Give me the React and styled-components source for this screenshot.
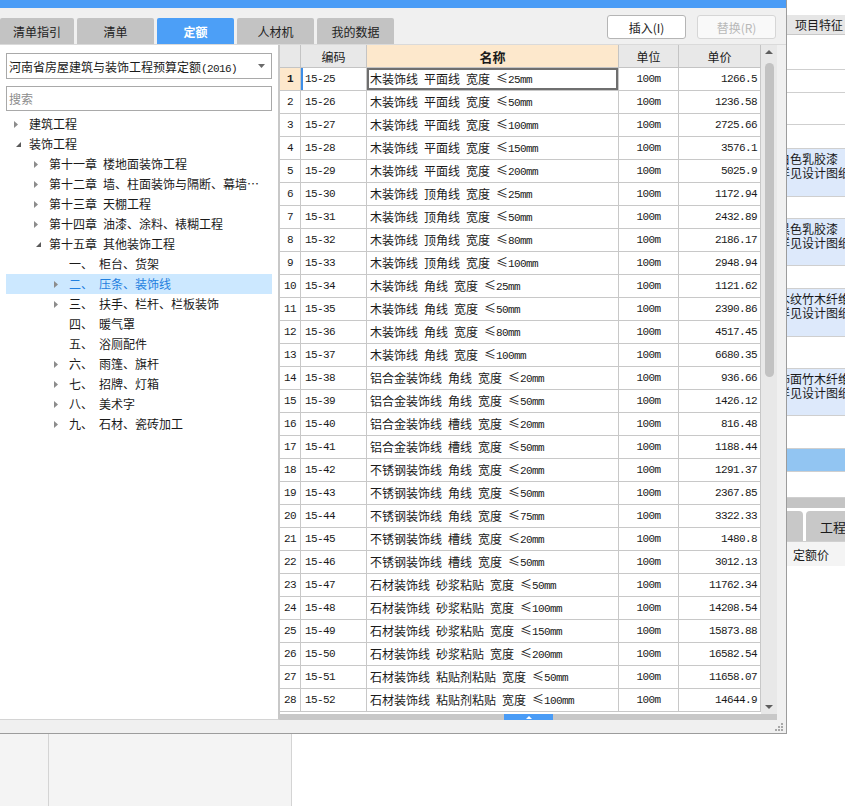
import React from "react";
import styled, { createGlobalStyle } from "styled-components";

const CJK = `"Noto Sans CJK SC", "Liberation Sans", sans-serif`;
const MONO = `"Liberation Mono", "Noto Sans CJK SC", monospace`;

const GlobalStyle = createGlobalStyle`
  html, body { margin: 0; padding: 0; background: #fff; }
  body {
    width: 845px; height: 806px; overflow: hidden;
    font-family: ${CJK}; font-size: 12px; color: #1a1a1a;
  }
  * { box-sizing: border-box; }
`;

const Page = styled.div`
  position: relative;
  width: 845px;
  height: 806px;
  overflow: hidden;
  background: #fff;
`;

/* ---------- background application ---------- */
const Background = styled.div`
  display: flex;
  flex-direction: column;
  height: 806px;
`;
const TopArea = styled.div`
  display: flex;
  height: 734px;
`;
const Filler = styled.div`
  flex: 1;
  background: #f0f0f0;
`;
const RightPanel = styled.div`
  width: 69px;
  display: flex;
  flex-direction: column;
  background: #fff;
  overflow: hidden;
`;
const PanelTopGap = styled.div`
  height: 15px;
`;
const PanelHeader = styled.div`
  height: 20px;
  display: flex;
  align-items: center;
  padding-left: 19px;
  background: #e6e6e6;
  border-bottom: 1px solid #c8c8c8;
  white-space: nowrap;
  line-height: 1;
`;
const FeatureRow = styled.div`
  height: ${(p) => p.$h}px;
  flex: none;
  border-bottom: 1px solid #cfcfcf;
  background: ${(p) => (p.$tone === "light" ? "#dde9fb" : p.$tone === "strong" ? "#92c5f2" : "#fff")};
  padding: 3px 0 0 2px;
  white-space: nowrap;
  line-height: 14px;
`;
const PanelScroll = styled.div`
  height: 10px;
  background: #c4c4c4;
  flex: none;
`;
const PanelTabs = styled.div`
  display: flex;
  gap: 3px;
  height: 30px;
  margin-top: 3px;
  flex: none;
`;
const PanelTab = styled.div`
  width: ${(p) => (p.$w ? `${p.$w}px` : "auto")};
  flex: ${(p) => (p.$w ? "none" : "1")};
  background: #c8c8c8;
  border-radius: 4px 4px 0 0;
  display: flex;
  align-items: center;
  padding-left: 14px;
  white-space: nowrap;
  font-size: 13px;
`;
const PanelPriceRow = styled.div`
  height: 25px;
  flex: none;
  display: flex;
  align-items: center;
  padding-left: 17px;
  background: #f4f4f4;
  border-top: 1px solid #d0d0d0;
  white-space: nowrap;
`;
const BottomArea = styled.div`
  display: flex;
  height: 72px;
`;
const BottomSide = styled.div`
  width: ${(p) => p.$w}px;
  background: #f4f4f4;
  border-right: 1px solid #d4d4d4;
`;
const BottomMain = styled.div`
  flex: 1;
  background: #fff;
`;

/* ---------- dialog ---------- */
const Dialog = styled.div`
  position: absolute;
  top: 0;
  left: 0;
  width: 787px;
  height: 734px;
  display: flex;
  flex-direction: column;
  background: #f0f0f0;
  border-right: 1px solid #9c9c9c;
  border-bottom: 1px solid #9c9c9c;
`;
const TitleBar = styled.div`
  height: 8px;
  background: #4a9cf6;
  flex: none;
`;
const Toolbar = styled.div`
  height: 36px;
  display: flex;
  align-items: flex-end;
  padding-right: 10px;
  flex: none;
`;
const TabList = styled.div`
  display: flex;
  gap: 3px;
`;
const Tab = styled.div`
  width: ${(p) => p.$w}px;
  height: 26px;
  display: flex;
  align-items: center;
  justify-content: center;
  border-radius: 2px 2px 0 0;
  background: ${(p) => (p.$active ? "#4c9ff7" : "#c3c3c3")};
  color: ${(p) => (p.$active ? "#fff" : "#222")};
  font-weight: ${(p) => (p.$active ? 700 : 400)};
  font-size: 12px;
`;
const Spacer = styled.div`
  flex: 1;
`;
const ButtonGroup = styled.div`
  display: flex;
  gap: 11px;
  align-self: flex-start;
  margin-top: 7px;
`;
const ActionButton = styled.button`
  width: 79px;
  height: 24px;
  padding: 0;
  border-radius: 3px;
  border: 1px solid ${(p) => (p.disabled ? "#d6d6d6" : "#b5b5b5")};
  background: ${(p) => (p.disabled ? "#f9f9f9" : "#fff")};
  color: ${(p) => (p.disabled ? "#b8b8b8" : "#222")};
  font-family: ${CJK};
  font-size: 12px;
`;
const Separator = styled.div`
  height: 1px;
  background: #dadada;
  flex: none;
`;
const Body = styled.div`
  display: flex;
  height: 675px;
  flex: none;
`;
const LeftPanel = styled.div`
  width: 280px;
  flex: none;
  display: flex;
  flex-direction: column;
  background: #fff;
  border-right: 2px solid #c8c8c8;
  border-bottom: 1px solid #d4d4d4;
  padding: 8px 6px 0 6px;
`;
const SelectBox = styled.div`
  height: 26px;
  border: 1px solid #a9a9a9;
  display: flex;
  align-items: center;
  justify-content: space-between;
  padding: 0 6px 0 2px;
  white-space: nowrap;
`;
const SearchBox = styled.div`
  margin-top: 7px;
  height: 25px;
  border: 1px solid #a9a9a9;
  display: flex;
  align-items: center;
  padding-left: 2px;
  color: #8c8c8c;
`;
const Tree = styled.div`
  margin-top: 3px;
  display: flex;
  flex-direction: column;
`;
const TreeRow = styled.div`
  height: 20px;
  display: flex;
  align-items: center;
  padding-left: ${(p) => 6 + p.$level * 20}px;
  padding-right: 6px;
  background: ${(p) => (p.$selected ? "#cce8ff" : "transparent")};
  color: ${(p) => (p.$selected ? "#1f80e0" : "#1a1a1a")};
  white-space: nowrap;
`;
const ArrowBox = styled.span`
  width: 17px;
  flex: none;
  display: flex;
  align-items: center;
  padding-left: ${(p) => (p.$open ? 4 : 2)}px;
`;
const TreeLabel = styled.span`
  flex: 1;
  min-width: 0;
  overflow: hidden;
  text-overflow: ellipsis;
  white-space: nowrap;
  line-height: 20px;
`;
const Gap = styled.span`
  margin-left: 6px;
`;
const GridArea = styled.div`
  flex: 1;
  display: flex;
  flex-direction: column;
`;
const GridMain = styled.div`
  height: 669px;
  display: flex;
  flex: none;
`;
const Table = styled.div`
  width: 481px;
  background: #fff;
  display: flex;
  flex-direction: column;
`;
const COLS = "21px 66px 252px 60px 82px";
const HeaderRow = styled.div`
  display: grid;
  grid-template-columns: ${COLS};
  height: 23px;
  flex: none;
`;
const HeaderCell = styled.div`
  display: flex;
  align-items: center;
  justify-content: center;
  background: ${(p) => (p.$hot ? "#fde8cc" : "#e8e8e8")};
  border-right: 1px solid #c4c4c4;
  border-bottom: 1px solid #c4c4c4;
  font-weight: ${(p) => (p.$hot ? 700 : 400)};
  font-size: ${(p) => (p.$hot ? 13 : 12)}px;
`;
const DataRow = styled.div`
  display: grid;
  grid-template-columns: ${COLS};
  height: 23px;
  flex: none;
`;
const Cell = styled.div`
  display: flex;
  align-items: center;
  justify-content: ${(p) => (p.$align === "right" ? "flex-end" : p.$align === "center" ? "center" : "flex-start")};
  padding: 0 ${(p) => (p.$align === "right" ? 3 : 0)}px 0 ${(p) => (p.$align === "left" ? p.$pl || 3 : 0)}px;
  border-right: 1px solid #c8c8c8;
  border-bottom: 1px solid #c8c8c8;
  background: ${(p) => (p.$hot ? "#fde8cc" : "#fff")};
  box-shadow: ${(p) => (p.$focus ? "inset 0 0 0 2px #6f6f6f" : p.$mark ? "inset 2px 0 0 #3d8ee8" : "none")};
  white-space: nowrap;
  overflow: hidden;
  line-height: 1;
`;
const Mono = styled.span`
  font-family: ${MONO};
  font-size: 11px;
  letter-spacing: -0.6px;
  font-weight: ${(p) => (p.$bold ? 700 : 400)};
`;
const Word = styled.span`
  margin-right: ${(p) => (p.$gap ? 6 : 0)}px;
`;
const VScroll = styled.div`
  width: 16px;
  background: #e8e8e8;
  display: flex;
  flex-direction: column;
  align-items: center;
`;
const ScrollArrow = styled.div`
  margin-top: ${(p) => (p.$up ? 5 : 0)}px;
  margin-bottom: ${(p) => (p.$up ? 0 : 5)}px;
  height: 4px;
  display: flex;
`;
const Thumb = styled.div`
  margin-top: 9px;
  width: 9px;
  height: 314px;
  border-radius: 5px;
  background: #c2c2c2;
`;
const HScroll = styled.div`
  height: 6px;
  background: #c8c8c8;
  display: flex;
  justify-content: center;
  flex: none;
`;
const Handle = styled.div`
  width: 49px;
  height: 6px;
  background: #4a9cf6;
  display: flex;
  align-items: center;
  justify-content: center;
`;
const RightGap = styled.div`
  width: 9px;
  flex: none;
`;
const BottomStrip = styled.div`
  height: 13px;
  display: flex;
  align-items: center;
  justify-content: flex-end;
  padding-right: 3px;
  flex: none;
`;

/* ---------- icons ---------- */
const ClosedArrow = () => (
  <svg width="4" height="7" viewBox="0 0 4 7"><path d="M0 0L4 3.5L0 7Z" fill="#8c8c8c" /></svg>
);
const OpenArrow = () => (
  <svg width="5" height="5" viewBox="0 0 5 5"><path d="M5 0V5H0Z" fill="#5a5a5a" /></svg>
);
const DropArrow = () => (
  <svg width="7" height="4" viewBox="0 0 7 4"><path d="M0 0H7L3.5 4Z" fill="#6a6a6a" /></svg>
);
const UpArrow = ({ color = "#5e5e5e" }) => (
  <svg width="8" height="4" viewBox="0 0 8 4"><path d="M4 0L8 4H0Z" fill={color} /></svg>
);
const DownArrow = () => (
  <svg width="8" height="4" viewBox="0 0 8 4"><path d="M0 0H8L4 4Z" fill="#5e5e5e" /></svg>
);
const Grip = () => (
  <svg width="8" height="8" viewBox="0 0 8 8" fill="#a8a8a8">
    <rect x="6" y="0" width="2" height="2" />
    <rect x="3" y="3" width="2" height="2" />
    <rect x="6" y="3" width="2" height="2" />
    <rect x="0" y="6" width="2" height="2" />
    <rect x="3" y="6" width="2" height="2" />
    <rect x="6" y="6" width="2" height="2" />
  </svg>
);

/* ---------- data ---------- */
const tabs = [
  { label: "清单指引", w: 74 },
  { label: "清单", w: 77 },
  { label: "定额", w: 77, active: true },
  { label: "人材机", w: 77 },
  { label: "我的数据", w: 77 },
];

const tree = [
  { level: 0, arrow: "closed", label: "建筑工程" },
  { level: 0, arrow: "open", label: "装饰工程" },
  { level: 1, arrow: "closed", prefix: "第十一章", label: "楼地面装饰工程" },
  { level: 1, arrow: "closed", prefix: "第十二章", label: "墙、柱面装饰与隔断、幕墙工程" },
  { level: 1, arrow: "closed", prefix: "第十三章", label: "天棚工程" },
  { level: 1, arrow: "closed", prefix: "第十四章", label: "油漆、涂料、裱糊工程" },
  { level: 1, arrow: "open", prefix: "第十五章", label: "其他装饰工程" },
  { level: 2, prefix: "一、", label: "柜台、货架" },
  { level: 2, arrow: "closed", prefix: "二、", label: "压条、装饰线", selected: true },
  { level: 2, arrow: "closed", prefix: "三、", label: "扶手、栏杆、栏板装饰" },
  { level: 2, prefix: "四、", label: "暖气罩" },
  { level: 2, prefix: "五、", label: "浴厕配件" },
  { level: 2, arrow: "closed", prefix: "六、", label: "雨篷、旗杆" },
  { level: 2, arrow: "closed", prefix: "七、", label: "招牌、灯箱" },
  { level: 2, arrow: "closed", prefix: "八、", label: "美术字" },
  { level: 2, arrow: "closed", prefix: "九、", label: "石材、瓷砖加工" },
];

const rows = [
  ["15-25", "木装饰线 平面线 宽度 ≤25mm", "1266.5"],
  ["15-26", "木装饰线 平面线 宽度 ≤50mm", "1236.58"],
  ["15-27", "木装饰线 平面线 宽度 ≤100mm", "2725.66"],
  ["15-28", "木装饰线 平面线 宽度 ≤150mm", "3576.1"],
  ["15-29", "木装饰线 平面线 宽度 ≤200mm", "5025.9"],
  ["15-30", "木装饰线 顶角线 宽度 ≤25mm", "1172.94"],
  ["15-31", "木装饰线 顶角线 宽度 ≤50mm", "2432.89"],
  ["15-32", "木装饰线 顶角线 宽度 ≤80mm", "2186.17"],
  ["15-33", "木装饰线 顶角线 宽度 ≤100mm", "2948.94"],
  ["15-34", "木装饰线 角线 宽度 ≤25mm", "1121.62"],
  ["15-35", "木装饰线 角线 宽度 ≤50mm", "2390.86"],
  ["15-36", "木装饰线 角线 宽度 ≤80mm", "4517.45"],
  ["15-37", "木装饰线 角线 宽度 ≤100mm", "6680.35"],
  ["15-38", "铝合金装饰线 角线 宽度 ≤20mm", "936.66"],
  ["15-39", "铝合金装饰线 角线 宽度 ≤50mm", "1426.12"],
  ["15-40", "铝合金装饰线 槽线 宽度 ≤20mm", "816.48"],
  ["15-41", "铝合金装饰线 槽线 宽度 ≤50mm", "1188.44"],
  ["15-42", "不锈钢装饰线 角线 宽度 ≤20mm", "1291.37"],
  ["15-43", "不锈钢装饰线 角线 宽度 ≤50mm", "2367.85"],
  ["15-44", "不锈钢装饰线 角线 宽度 ≤75mm", "3322.33"],
  ["15-45", "不锈钢装饰线 槽线 宽度 ≤20mm", "1480.8"],
  ["15-46", "不锈钢装饰线 槽线 宽度 ≤50mm", "3012.13"],
  ["15-47", "石材装饰线 砂浆粘贴 宽度 ≤50mm", "11762.34"],
  ["15-48", "石材装饰线 砂浆粘贴 宽度 ≤100mm", "14208.54"],
  ["15-49", "石材装饰线 砂浆粘贴 宽度 ≤150mm", "15873.88"],
  ["15-50", "石材装饰线 砂浆粘贴 宽度 ≤200mm", "16582.54"],
  ["15-51", "石材装饰线 粘贴剂粘贴 宽度 ≤50mm", "11658.07"],
  ["15-52", "石材装饰线 粘贴剂粘贴 宽度 ≤100mm", "14644.9"],
];

const featureRows = [
  { h: 35 },
  { h: 23 },
  { h: 32 },
  { h: 24 },
  { h: 48, tone: "light", lines: ["白色乳胶漆", "详见设计图纸"] },
  { h: 22 },
  { h: 47, tone: "light", lines: ["黑色乳胶漆", "详见设计图纸"] },
  { h: 23 },
  { h: 48, tone: "light", lines: ["木纹竹木纤维板", "详见设计图纸"] },
  { h: 32 },
  { h: 47, tone: "light", lines: ["饰面竹木纤维板", "详见设计图纸"] },
  { h: 33 },
  { h: 23, tone: "strong" },
  { h: 26 },
];

function NameText({ text }) {
  const words = text.split(" ");
  return words.map((w, i) => {
    const m = w.match(/^(≤)(\d+mm)$/);
    return (
      <Word key={i} $gap={i < words.length - 1}>
        {m ? (
          <>
            {m[1]}
            <Mono>{m[2]}</Mono>
          </>
        ) : (
          w
        )}
      </Word>
    );
  });
}

export default function App() {
  return (
    <Page>
      <GlobalStyle />
      <Background>
        <TopArea>
          <Filler />
          <RightPanel>
            <PanelTopGap />
            <PanelHeader>项目特征</PanelHeader>
            {featureRows.map((r, i) => (
              <FeatureRow key={i} $h={r.h} $tone={r.tone}>
                {r.lines && r.lines.map((l, j) => <div key={j}>{l}</div>)}
              </FeatureRow>
            ))}
            <PanelScroll />
            <PanelTabs>
              <PanelTab $w={27} />
              <PanelTab>工程量清单</PanelTab>
            </PanelTabs>
            <PanelPriceRow>定额价</PanelPriceRow>
          </RightPanel>
        </TopArea>
        <BottomArea>
          <BottomSide $w={49} />
          <BottomSide $w={243} />
          <BottomMain />
        </BottomArea>
      </Background>

      <Dialog>
        <TitleBar />
        <Toolbar>
          <TabList>
            {tabs.map((t) => (
              <Tab key={t.label} $w={t.w} $active={t.active}>
                {t.label}
              </Tab>
            ))}
          </TabList>
          <Spacer />
          <ButtonGroup>
            <ActionButton>插入(I)</ActionButton>
            <ActionButton disabled>替换(R)</ActionButton>
          </ButtonGroup>
        </Toolbar>
        <Separator />
        <Body>
          <LeftPanel>
            <SelectBox>
              <span>
                河南省房屋建筑与装饰工程预算定额<Mono>(2016)</Mono>
              </span>
              <DropArrow />
            </SelectBox>
            <SearchBox>搜索</SearchBox>
            <Tree>
              {tree.map((n, i) => (
                <TreeRow key={i} $level={n.level} $selected={n.selected}>
                  <ArrowBox $open={n.arrow === "open"}>
                    {n.arrow === "closed" && <ClosedArrow />}
                    {n.arrow === "open" && <OpenArrow />}
                  </ArrowBox>
                  <TreeLabel>
                    {n.prefix}
                    {n.prefix ? <Gap>{n.label}</Gap> : n.label}
                  </TreeLabel>
                </TreeRow>
              ))}
            </Tree>
          </LeftPanel>
          <GridArea>
            <GridMain>
              <Table>
                <HeaderRow>
                  <HeaderCell />
                  <HeaderCell>编码</HeaderCell>
                  <HeaderCell $hot>名称</HeaderCell>
                  <HeaderCell>单位</HeaderCell>
                  <HeaderCell>单价</HeaderCell>
                </HeaderRow>
                {rows.map((r, i) => (
                  <DataRow key={r[0]}>
                    <Cell $align="center" $hot={i === 0}>
                      <Mono $bold={i === 0}>{i + 1}</Mono>
                    </Cell>
                    <Cell $align="left" $pl={4} $mark={i === 0}>
                      <Mono>{r[0]}</Mono>
                    </Cell>
                    <Cell $align="left" $pl={3} $focus={i === 0}>
                      <NameText text={r[1]} />
                    </Cell>
                    <Cell $align="center">
                      <Mono>100m</Mono>
                    </Cell>
                    <Cell $align="right">
                      <Mono>{r[2]}</Mono>
                    </Cell>
                  </DataRow>
                ))}
              </Table>
              <VScroll>
                <ScrollArrow $up>
                  <UpArrow />
                </ScrollArrow>
                <Thumb />
                <Spacer />
                <ScrollArrow>
                  <DownArrow />
                </ScrollArrow>
              </VScroll>
            </GridMain>
            <HScroll>
              <Handle>
                <svg width="6" height="3" viewBox="0 0 6 3"><path d="M3 0L6 3H0Z" fill="#fff" /></svg>
              </Handle>
            </HScroll>
          </GridArea>
          <RightGap />
        </Body>
        <BottomStrip>
          <Grip />
        </BottomStrip>
      </Dialog>
    </Page>
  );
}
